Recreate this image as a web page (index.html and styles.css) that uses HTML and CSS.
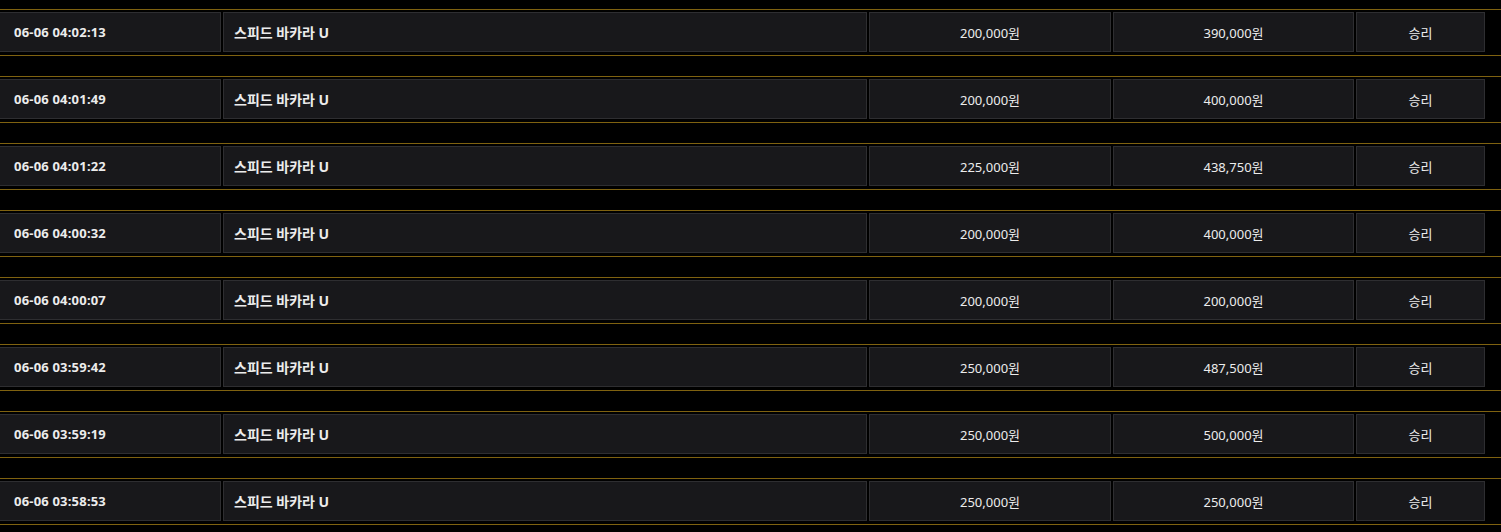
FILE: index.html
```html
<!DOCTYPE html>
<html lang="ko">
<head>
<meta charset="UTF-8" />
<title>베팅 내역</title>
<link rel="stylesheet" href="styles.css">
</head>
<body>

<div class="bet-list">
    <div class="bet-row">
        <div class="cell c-time">06-06 04:02:13</div>
        <div class="cell c-game">스피드 바카라 U</div>
        <div class="cell c-bet">200,000원</div>
        <div class="cell c-win">390,000원</div>
        <div class="cell c-result">승리</div>
    </div>
    <div class="bet-row">
        <div class="cell c-time">06-06 04:01:49</div>
        <div class="cell c-game">스피드 바카라 U</div>
        <div class="cell c-bet">200,000원</div>
        <div class="cell c-win">400,000원</div>
        <div class="cell c-result">승리</div>
    </div>
    <div class="bet-row">
        <div class="cell c-time">06-06 04:01:22</div>
        <div class="cell c-game">스피드 바카라 U</div>
        <div class="cell c-bet">225,000원</div>
        <div class="cell c-win">438,750원</div>
        <div class="cell c-result">승리</div>
    </div>
    <div class="bet-row">
        <div class="cell c-time">06-06 04:00:32</div>
        <div class="cell c-game">스피드 바카라 U</div>
        <div class="cell c-bet">200,000원</div>
        <div class="cell c-win">400,000원</div>
        <div class="cell c-result">승리</div>
    </div>
    <div class="bet-row">
        <div class="cell c-time">06-06 04:00:07</div>
        <div class="cell c-game">스피드 바카라 U</div>
        <div class="cell c-bet">200,000원</div>
        <div class="cell c-win">200,000원</div>
        <div class="cell c-result">승리</div>
    </div>
    <div class="bet-row">
        <div class="cell c-time">06-06 03:59:42</div>
        <div class="cell c-game">스피드 바카라 U</div>
        <div class="cell c-bet">250,000원</div>
        <div class="cell c-win">487,500원</div>
        <div class="cell c-result">승리</div>
    </div>
    <div class="bet-row">
        <div class="cell c-time">06-06 03:59:19</div>
        <div class="cell c-game">스피드 바카라 U</div>
        <div class="cell c-bet">250,000원</div>
        <div class="cell c-win">500,000원</div>
        <div class="cell c-result">승리</div>
    </div>
    <div class="bet-row">
        <div class="cell c-time">06-06 03:58:53</div>
        <div class="cell c-game">스피드 바카라 U</div>
        <div class="cell c-bet">250,000원</div>
        <div class="cell c-win">250,000원</div>
        <div class="cell c-result">승리</div>
    </div>
</div>

</body>
</html>
```

FILE: styles.css
```css
body {
    margin: 0;
    padding: 0;
    background-color: #000000;
    color: #ececec;
    font-family: "Noto Sans", "Noto Sans CJK KR", sans-serif;
    font-size: 13px;
}

.bet-list {
    padding-top: 9px;
}

.bet-row {
    display: flex;
    gap: 2px;
    padding: 2px 0 3px 0;
    margin-bottom: 20px;
    border-top: 1px solid #7f6210;
    border-bottom: 1px solid #7f6210;
}

.cell {
    box-sizing: border-box;
    height: 40px;
    display: flex;
    align-items: center;
    background-color: #18181b;
    border: 1px solid #2e2e31;
    white-space: nowrap;
}

.c-time {
    width: 221px;
    border-left: none;
    padding-left: 14px;
    font-weight: bold;
    letter-spacing: 0.2px;
}

.c-game {
    width: 644px;
    padding-left: 10px;
    font-weight: bold;
    font-size: 14px;
}

.c-bet,
.c-win,
.c-result {
    justify-content: center;
}

.c-bet {
    width: 242px;
}

.c-win {
    width: 241px;
}

.c-result {
    width: 129px;
}
```
